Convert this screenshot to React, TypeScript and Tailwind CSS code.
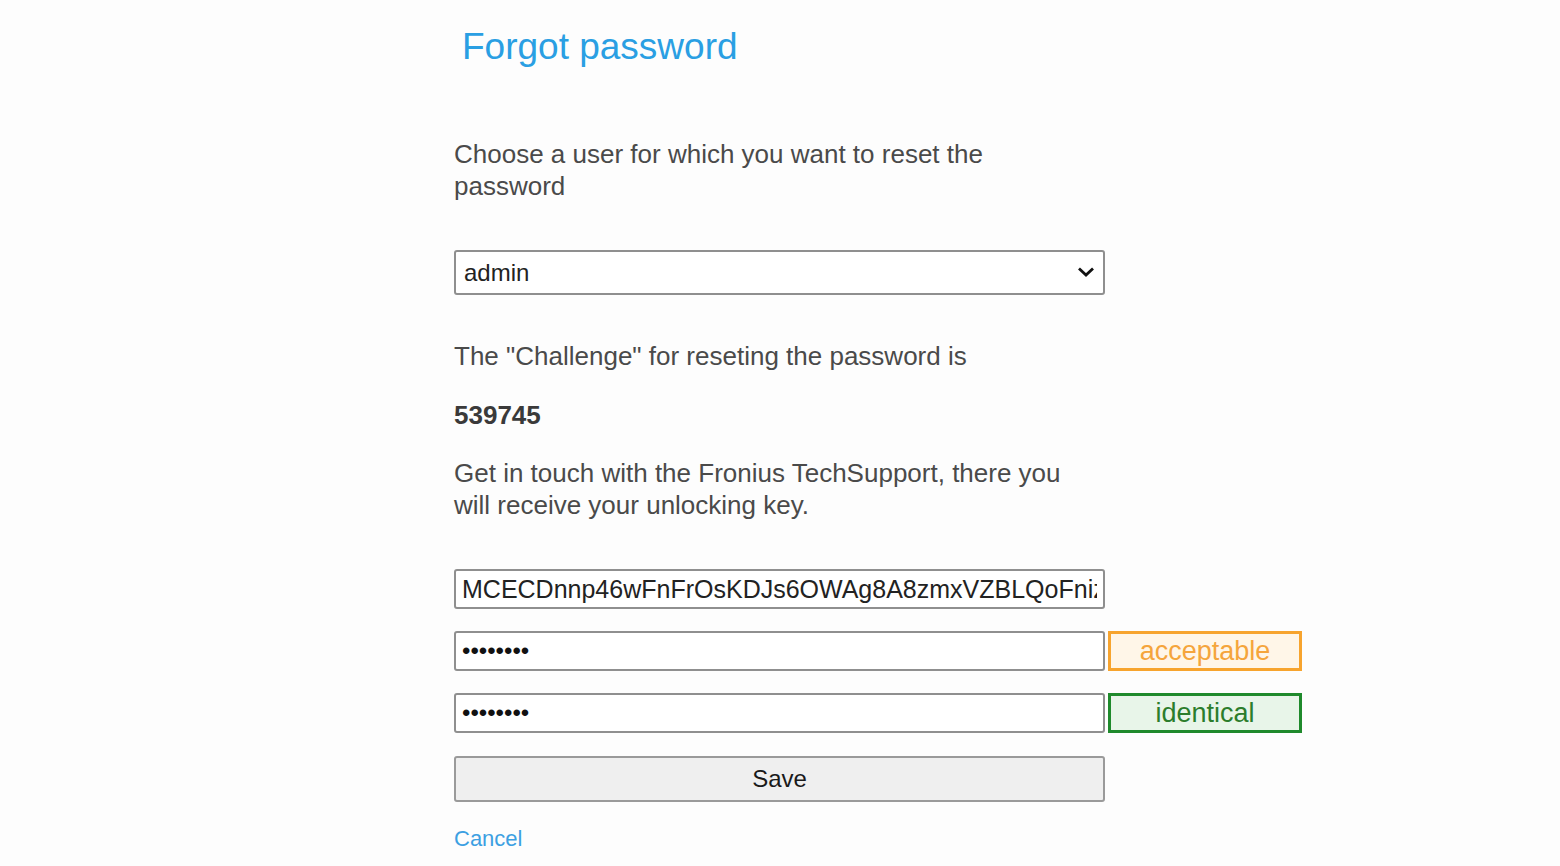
import { useState } from "react";

const font = { fontFamily: '"Liberation Sans", Arial, sans-serif' };

export default function App() {
	const [user, setUser] = useState("admin");

	return (
		<div
			className="min-h-screen bg-[#fdfdfd] pl-[454px] text-[#4a4a4a]"
			style={font}
		>
			<h1 className="ml-2 pt-[26px] text-[37px] leading-[42px] text-[#2a9fe3]">
				Forgot password
			</h1>

			<p className="mt-[70px] w-[630px] text-[26px] leading-[32px]">
				Choose a user for which you want to reset the password
			</p>

			<div className="relative mt-[48px] w-[651px]">
				<select
					value={user}
					onChange={(e) => setUser(e.target.value)}
					className="h-[45px] w-full appearance-none rounded-[3px] border-2 border-[#8f8f8f] bg-white pl-2 text-[24px] text-[#222]"
				>
					<option value="admin">admin</option>
					<option value="service">service</option>
				</select>
				<svg
					className="pointer-events-none absolute right-[10px] top-[16px]"
					width="18"
					height="12"
					viewBox="0 0 18 12"
				>
					<path
						d="M2 2.5 L9 9 L16 2.5"
						fill="none"
						stroke="#111"
						strokeWidth="2.8"
					/>
				</svg>
			</div>

			<p className="mt-[45px] text-[26px] leading-[32px]">
				The "Challenge" for reseting the password is
			</p>
			<p className="mt-[27px] text-[26px] font-bold leading-[32px] text-[#3a3a3a]">
				539745
			</p>
			<p className="mt-[26px] w-[630px] text-[26px] leading-[32px]">
				Get in touch with the Fronius TechSupport, there you will
				receive your unlocking key.
			</p>

			<input
				type="text"
				defaultValue="MCECDnnp46wFnFrOsKDJs6OWAg8A8zmxVZBLQoFnizXk"
				className="mt-[48px] block h-[40px] w-[651px] rounded-[3px] border-2 border-[#8f8f8f] bg-white px-[6px] text-[25px] text-[#222] outline-none"
			/>

			<div className="mt-[22px] flex items-center gap-[3px]">
				<input
					type="password"
					defaultValue="password"
					className="block h-[40px] w-[651px] rounded-[3px] border-2 border-[#8f8f8f] bg-white px-[6px] text-[24px] text-[#111] outline-none"
				/>
				<span className="flex h-[40px] w-[194px] items-center justify-center border-[3px] border-[#f7a42e] bg-[#fff6e8] text-[27px] text-[#f5a53c]">
					acceptable
				</span>
			</div>

			<div className="mt-[22px] flex items-center gap-[3px]">
				<input
					type="password"
					defaultValue="password"
					className="block h-[40px] w-[651px] rounded-[3px] border-2 border-[#8f8f8f] bg-white px-[6px] text-[24px] text-[#111] outline-none"
				/>
				<span className="flex h-[40px] w-[194px] items-center justify-center border-[3px] border-[#1f8a2c] bg-[#e8f5e9] text-[27px] text-[#2c7d2c]">
					identical
				</span>
			</div>

			<button className="mt-[23px] block h-[46px] w-[651px] rounded-[3px] border-2 border-[#9a9a9a] bg-[#efefef] text-[24px] text-[#1a1a1a]">
				Save
			</button>

			<a
				href="#"
				className="mt-[23px] block text-[22px] leading-[28px] text-[#3ca0e2]"
			>
				Cancel
			</a>
		</div>
	);
}
